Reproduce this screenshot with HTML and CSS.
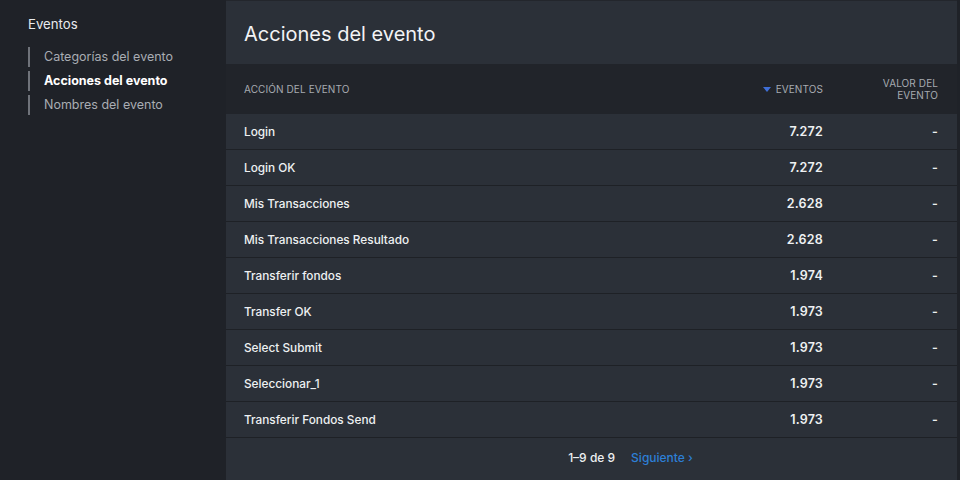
FILE: index.html
```html
<!DOCTYPE html>
<html lang="es">
<head>
<meta charset="utf-8">
<title>Acciones del evento</title>
<link rel="stylesheet" href="styles.css">
</head>
<body>
<div class="app">
  <aside class="sidebar">
    <div class="side-title">Eventos</div>
    <nav class="side-nav">
      <a class="side-item">Categorías del evento</a>
      <a class="side-item active">Acciones del evento</a>
      <a class="side-item">Nombres del evento</a>
    </nav>
  </aside>
  <main class="panel">
    <h1 class="title">Acciones del evento</h1>
    <div class="table">
      <div class="row head">
        <div class="c1">Acción del evento</div>
        <div class="c2"><span class="sort"></span>Eventos</div>
        <div class="c3">Valor del<br>evento</div>
      </div>
      <div class="row"><div class="c1">Login</div><div class="c2 num">7.272</div><div class="c3 num">-</div></div>
      <div class="row"><div class="c1">Login OK</div><div class="c2 num">7.272</div><div class="c3 num">-</div></div>
      <div class="row"><div class="c1">Mis Transacciones</div><div class="c2 num">2.628</div><div class="c3 num">-</div></div>
      <div class="row"><div class="c1">Mis Transacciones Resultado</div><div class="c2 num">2.628</div><div class="c3 num">-</div></div>
      <div class="row"><div class="c1">Transferir fondos</div><div class="c2 num">1.974</div><div class="c3 num">-</div></div>
      <div class="row"><div class="c1">Transfer OK</div><div class="c2 num">1.973</div><div class="c3 num">-</div></div>
      <div class="row"><div class="c1">Select Submit</div><div class="c2 num">1.973</div><div class="c3 num">-</div></div>
      <div class="row"><div class="c1">Seleccionar_1</div><div class="c2 num">1.973</div><div class="c3 num">-</div></div>
      <div class="row"><div class="c1">Transferir Fondos Send</div><div class="c2 num">1.973</div><div class="c3 num">-</div></div>
    </div>
    <div class="pager">
      <span class="range">1–9 de 9</span>
      <a class="next">Siguiente ›</a>
    </div>
  </main>
</div>
</body>
</html>
```

FILE: styles.css
```css
html, body {
  margin: 0;
  padding: 0;
  background: #1f2228;
  height: 100%;
  overflow: hidden;
}
body {
  font-family: Inter, "Liberation Sans", sans-serif;
  color: #e6e8eb;
  -webkit-font-smoothing: antialiased;
}
.app {
  display: grid;
  grid-template-columns: 226px 731px;
  height: 480px;
}
.sidebar {
  padding: 15px 0 0 28px;
}
.side-title {
  font-size: 13.2px;
  color: #e8eaed;
  line-height: 18px;
}
.side-nav {
  display: flex;
  flex-direction: column;
  gap: 4px;
  margin-top: 14px;
}
.side-item {
  display: block;
  border-left: 2px solid #6f737a;
  padding-left: 14px;
  font-size: 12.5px;
  line-height: 20px;
  color: #a9adb3;
}
.side-item.active {
  color: #ffffff;
  font-weight: 700;
}
.panel {
  background: #2b3038;
  border-top: 1px solid #23262c;
  display: flex;
  flex-direction: column;
}
.title {
  margin: 0;
  height: 63px;
  box-sizing: border-box;
  padding: 20px 0 0 18px;
  font-size: 20px;
  font-weight: 400;
  line-height: 26px;
  color: #f2f3f5;
}
.row {
  display: grid;
  grid-template-columns: 1fr 120px 115px;
  align-items: center;
  padding: 0 19px 0 18px;
  height: 35px;
  border-bottom: 1px solid #1e2126;
  font-size: 11.8px;
  font-weight: 500;
  color: #eef0f2;
}
.row.head {
  height: 50px;
  border-bottom: none;
  background: #21242a;
  font-size: 10px;
  font-weight: 400;
  text-transform: uppercase;
  color: #a7abb1;
  letter-spacing: 0.1px;
  line-height: 12px;
}
.c2, .c3 {
  text-align: right;
}
.num {
  font-size: 12.5px;
  font-weight: 600;
  letter-spacing: 0.2px;
}
.sort {
  display: inline-block;
  width: 0;
  height: 0;
  border-left: 4px solid transparent;
  border-right: 4px solid transparent;
  border-top: 5px solid #3f6fd8;
  margin-right: 5px;
  vertical-align: 1px;
}
.pager {
  display: flex;
  justify-content: center;
  gap: 16px;
  padding-top: 12px;
  padding-left: 78px;
  font-size: 12px;
  font-weight: 500;
}
.range {
  color: #eef0f2;
}
.next {
  color: #2d7fd6;
}
```
